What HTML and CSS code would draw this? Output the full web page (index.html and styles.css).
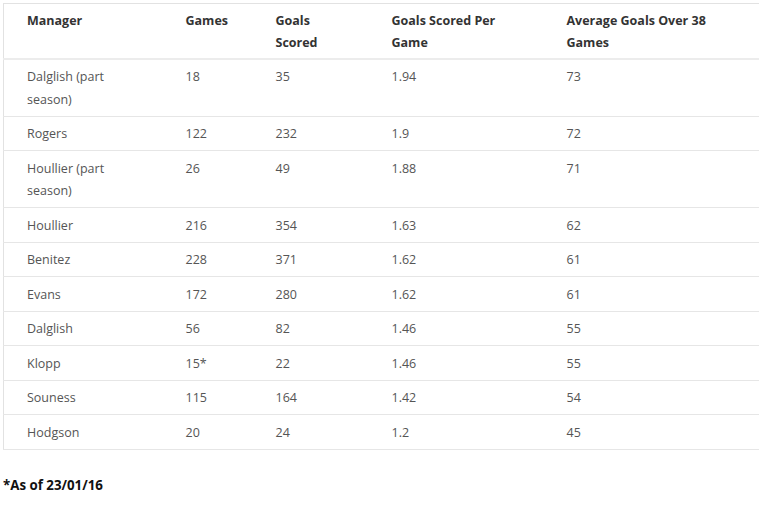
FILE: index.html
```html
<!DOCTYPE html>
<html>
<head>
<meta charset="utf-8">
<link rel="stylesheet" href="styles.css">
</head>
<body>
<div class="page">
<table class="stats">
  <colgroup>
    <col class="c1"><col class="c2"><col class="c3"><col class="c4"><col class="c5">
  </colgroup>
  <thead>
    <tr><th>Manager</th><th>Games</th><th>Goals Scored</th><th>Goals Scored Per Game</th><th>Average Goals Over 38 Games</th></tr>
  </thead>
  <tbody>
    <tr><td>Dalglish (part season)</td><td>18</td><td>35</td><td>1.94</td><td>73</td></tr>
    <tr><td>Rogers</td><td>122</td><td>232</td><td>1.9</td><td>72</td></tr>
    <tr><td>Houllier (part season)</td><td>26</td><td>49</td><td>1.88</td><td>71</td></tr>
    <tr><td>Houllier</td><td>216</td><td>354</td><td>1.63</td><td>62</td></tr>
    <tr><td>Benitez</td><td>228</td><td>371</td><td>1.62</td><td>61</td></tr>
    <tr><td>Evans</td><td>172</td><td>280</td><td>1.62</td><td>61</td></tr>
    <tr><td>Dalglish</td><td>56</td><td>82</td><td>1.46</td><td>55</td></tr>
    <tr><td>Klopp</td><td>15*</td><td>22</td><td>1.46</td><td>55</td></tr>
    <tr><td>Souness</td><td>115</td><td>164</td><td>1.42</td><td>54</td></tr>
    <tr><td>Hodgson</td><td>20</td><td>24</td><td>1.2</td><td>45</td></tr>
  </tbody>
</table>
<p class="note">*As of 23/01/16</p>
</div>
</body>
</html>
```
FILE: styles.css
```css
html, body {
  margin: 0;
  padding: 0;
  background: #fff;
  overflow: hidden;
}
.page {
  padding: 3px 0 0 3px;
  font-family: "Open Sans", "Noto Sans", sans-serif;
  font-size: 12.5px;
}
.stats {
  width: 756px;
  table-layout: fixed;
  border-collapse: collapse;
  border: 1px solid #e2e2e2;
  border-right: none;
}
.c1 { width: 159px; }
.c2 { width: 90px; }
.c3 { width: 116px; }
.c4 { width: 175px; }
.c5 { width: 216px; }
.stats th, .stats td {
  text-align: left;
  vertical-align: top;
  padding: 6.2px 24px 4.8px 23px;
  line-height: 22.5px;
  border-bottom: 1px solid #e6e6e6;
}
.stats th {
  font-weight: 700;
  color: #333;
  padding: 6px 24px 4px 23px;
  line-height: 22px;
}
.stats thead tr {
  border-bottom: 2px solid #ececec;
}
.stats td {
  color: #555;
}
.note {
  margin: 25px 0 0 0;
  font-size: 13.3px;
  font-weight: 700;
  color: #111;
  line-height: 20px;
}
```
